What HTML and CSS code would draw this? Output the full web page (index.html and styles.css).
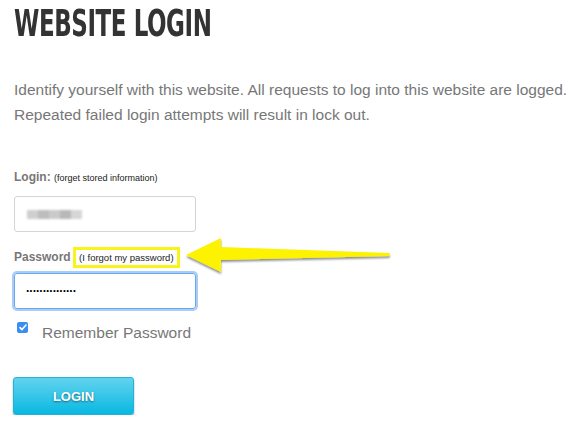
FILE: index.html
```html
<!DOCTYPE html>
<html>
<head>
<meta charset="utf-8">
<link rel="stylesheet" href="styles.css">
</head>
<body>
<div class="page">
  <h1 class="title">WEBSITE LOGIN</h1>
  <p class="intro">Identify yourself with this website. All requests to log into this website are logged.<br>Repeated failed login attempts will result in lock out.</p>
  <form class="form">
    <div class="label"><b>Login:</b> <span class="small">(forget stored information)</span></div>
    <div class="field"><span class="blurred"></span></div>
    <div class="label pw-label">
      <b>Password</b> <span class="small highlight">(I forgot my password)</span>
      <svg class="arrow" width="220" height="50" viewBox="0 0 220 50">
        <defs>
          <filter id="sh" x="-10%" y="-30%" width="130%" height="180%">
            <feGaussianBlur in="SourceAlpha" stdDeviation="1.2"/>
            <feOffset dx="0" dy="2" result="b"/>
            <feComponentTransfer><feFuncA type="linear" slope="0.45"/></feComponentTransfer>
            <feMerge><feMergeNode/><feMergeNode in="SourceGraphic"/></feMerge>
          </filter>
        </defs>
        <path d="M6 23 L41 6 L41 15 L209 21 Q211 22.5 209 24 L41 28 L41 40 Z" fill="#fdf200" filter="url(#sh)"/>
      </svg>
    </div>
    <div class="field focus"><span class="dots">...............</span></div>
    <label class="remember"><span class="check"><svg width="8" height="7" viewBox="0 0 8 7"><path d="M1 3.6 L3 5.6 L7 1" fill="none" stroke="#fff" stroke-width="1.6" stroke-linecap="round" stroke-linejoin="round"/></svg></span>Remember Password</label>
    <div class="button">LOGIN</div>
  </form>
</div>
</body>
</html>
```
FILE: styles.css
```css
html, body { margin: 0; padding: 0; background: #fff; }
.page { padding: 0 0 0 14px; font-family: "Liberation Sans", Arial, sans-serif; }
.title {
  margin: 0;
  padding-top: 4px;
  font-family: "DejaVu Sans Condensed", "Liberation Sans", sans-serif;
  font-weight: bold;
  font-size: 37px;
  line-height: 40px;
  color: #333;
  letter-spacing: -0.6px;
  transform: scaleX(0.69);
  transform-origin: left center;
  white-space: nowrap;
}
.intro {
  margin: 33px 0 0 0;
  font-size: 15.5px;
  line-height: 25px;
  color: #777;
  letter-spacing: 0px;
  white-space: nowrap;
}
.form { margin-top: 42px; }
.label { font-size: 12px; line-height: 16px; color: #777; position: relative; }
.label b { font-weight: bold; }
.small { font-size: 9px; color: #222; }
.field {
  margin-top: 10px;
  border: 1px solid #d4d4d4;
  border-radius: 3px;
  display: flex;
  align-items: center;
  padding-left: 12px;
  box-sizing: border-box;
  width: 182px;
  height: 36px;
}
.blurred {
  display: block;
  width: 55px;
  height: 9px;
  background: linear-gradient(90deg, #cfcfcf 0 20%, #bdbdbd 20% 40%, #cacaca 40% 60%, #b8b8b8 60% 80%, #d6d6d6 80% 100%);
  filter: blur(1.2px);
}
.pw-label { margin-top: 15px; }
.highlight {
  display: inline-block;
  border: 3px solid #fbf21a;
  padding: 2px 3px;
  line-height: 11px;
  margin-left: -1px;
  font-size: 9.5px;
}
.arrow { position: absolute; left: 166px; top: -15px; }
.field.focus {
  margin-top: 5px;
  border: 1px solid #6ba7ec;
  box-shadow: 0 0 0 2px #a9cdf7;
  padding-left: 11px;
}
.dots { font-size: 12px; font-weight: bold; color: #000; letter-spacing: 0px; line-height: 10px; position: relative; top: -3px; }
.remember {
  display: flex;
  align-items: center;
  margin-top: 14px;
  font-size: 15.5px;
  color: #777;
  line-height: 20px;
}
.check {
  width: 11px; height: 11px;
  background: #3a8ef2;
  border-radius: 2px;
  margin: 0 14px 0 3px;
  display: flex; align-items: center; justify-content: center;
  position: relative; top: -6px;
}
.button {
  margin-top: 34px;
  width: 121px;
  height: 38px;
  border-radius: 3px;
  background: linear-gradient(#62d3ef, #09b8e2);
  border: 1px solid #1fb4d8;
  box-sizing: border-box;
  box-shadow: 0 2px 2px rgba(0,0,0,0.35);
  color: #fff;
  font-weight: bold;
  font-size: 13px;
  display: flex; align-items: center; justify-content: center;
  text-shadow: 0 1px 2px rgba(0,0,0,0.45);
  margin-left: -1px;
}
```
